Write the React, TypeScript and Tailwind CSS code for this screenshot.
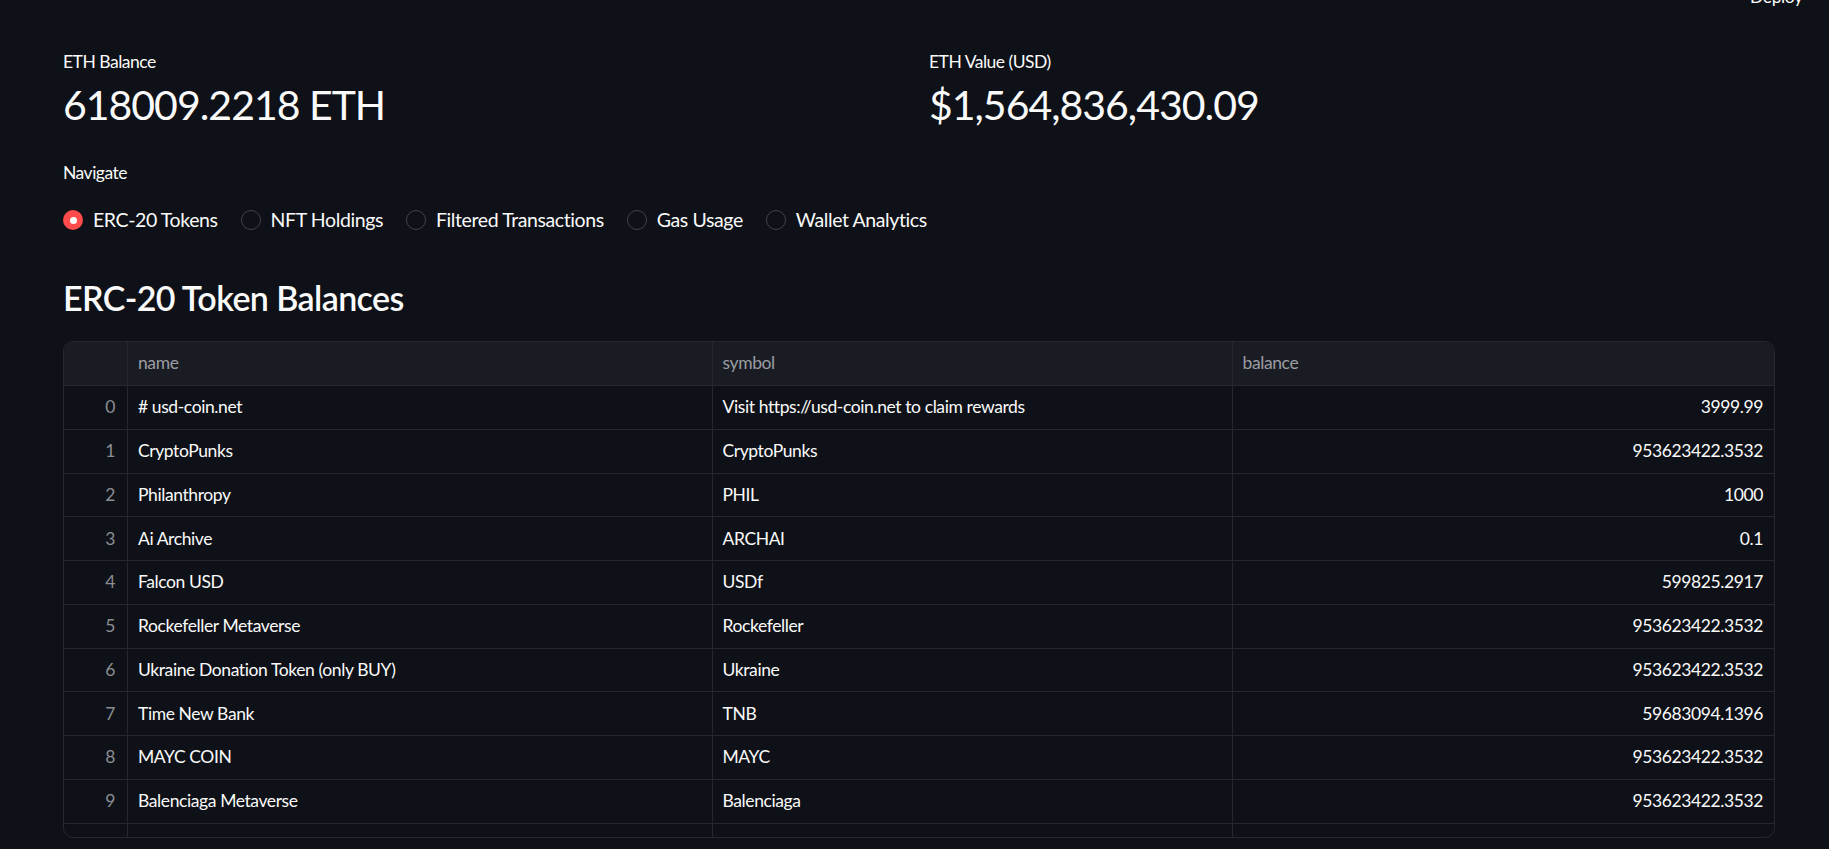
import React from 'react';

// Streamlit-like dark dashboard: ERC-20 token balances
type TokenRow = { name: string; symbol: string; balance: string };

const tokens: TokenRow[] = [
  { name: '# usd-coin.net', symbol: 'Visit https://usd-coin.net to claim rewards', balance: '3999.99' },
  { name: 'CryptoPunks', symbol: 'CryptoPunks', balance: '953623422.3532' },
  { name: 'Philanthropy', symbol: 'PHIL', balance: '1000' },
  { name: 'Ai Archive', symbol: 'ARCHAI', balance: '0.1' },
  { name: 'Falcon USD', symbol: 'USDf', balance: '599825.2917' },
  { name: 'Rockefeller Metaverse', symbol: 'Rockefeller', balance: '953623422.3532' },
  { name: 'Ukraine Donation Token (only BUY)', symbol: 'Ukraine', balance: '953623422.3532' },
  { name: 'Time New Bank', symbol: 'TNB', balance: '59683094.1396' },
  { name: 'MAYC COIN', symbol: 'MAYC', balance: '953623422.3532' },
  { name: 'Balenciaga Metaverse', symbol: 'Balenciaga', balance: '953623422.3532' },
  { name: 'Bored Ape Metaverse', symbol: 'BoredApe', balance: '953623422.3532' },
];

const navItems = ['ERC-20 Tokens', 'NFT Holdings', 'Filtered Transactions', 'Gas Usage', 'Wallet Analytics'];

function Metric({ label, value }: { label: string; value: string }) {
  return (
    <div className="flex flex-col">
      <div className="h-6 leading-6 text-[17.5px] tracking-[-0.5px] text-[#fafafa]">{label}</div>
      <div className="mt-[3px] h-14 leading-[56px] text-[41px] tracking-[-1px] text-[#fafafa]">{value}</div>
    </div>
  );
}

function Radio({ label, checked }: { label: string; checked: boolean }) {
  return (
    <label className="flex items-center gap-[10px] cursor-pointer">
      {checked ? (
        <span className="flex h-5 w-5 items-center justify-center rounded-full bg-[#ff4b4b]">
          <span className="h-[7px] w-[7px] rounded-full bg-white" />
        </span>
      ) : (
        <span className="h-5 w-5 rounded-full border border-[#42444c] bg-[#0e1117]" />
      )}
      <span className="text-[19.5px] tracking-[-0.4px] leading-[30px] text-[#fafafa]">{label}</span>
    </label>
  );
}

export default function App() {
  const selected = 'ERC-20 Tokens';
  const cols = 'grid grid-cols-[64px_584.5px_520px_1fr]';

  return (
    <div
      className="relative min-h-screen w-full overflow-hidden bg-[#0e1117] text-[#fafafa]"
      style={{ fontFamily: '"Source Sans Pro", Lato, "Noto Sans", sans-serif' }}
    >
      <div className="absolute left-[1750px] top-[-15px] h-6 leading-6 text-[17.5px] tracking-[-0.4px] text-[#fafafa]">Deploy</div>

      <div className="flex flex-col pl-[63px] pr-[54px] pt-[50px]">
        <div className="grid grid-cols-2 gap-5">
          <Metric label="ETH Balance" value="618009.2218 ETH" />
          <Metric label="ETH Value (USD)" value="$1,564,836,430.09" />
        </div>

        <div className="mt-[28px] h-6 leading-6 text-[17.5px] tracking-[-0.5px]">Navigate</div>
        <div className="mt-[20px] flex items-center gap-x-[23px]">
          {navItems.map((item) => (
            <Radio key={item} label={item} checked={item === selected} />
          ))}
        </div>

        <h3 className="mt-[41px] h-11 leading-[44px] text-[34px] tracking-[-0.6px] font-semibold">ERC-20 Token Balances</h3>

        <div className="mt-[21px] h-[497px] overflow-hidden rounded-[10px] border border-[#262830] text-[17.5px] tracking-[-0.4px]">
          <div className={`${cols} h-[44px] bg-[#1a1c24] border-b border-[#262830] text-[#9b9da3]`}>
            <div className="border-r border-[#262830]" />
            <div className="flex items-center border-r border-[#262830] pl-[10px]">name</div>
            <div className="flex items-center border-r border-[#262830] pl-[10px]">symbol</div>
            <div className="flex items-center pl-[10px]">balance</div>
          </div>
          {tokens.map((t, i) => (
            <div key={i} className={`${cols} h-[43.75px] border-b border-[#262830]`}>
              <div className="flex items-center justify-end border-r border-[#262830] pr-[12px] text-[#8b8d93]">{i}</div>
              <div className="flex items-center border-r border-[#262830] pl-[10px] whitespace-nowrap">{t.name}</div>
              <div className="flex items-center border-r border-[#262830] pl-[10px] whitespace-nowrap">{t.symbol}</div>
              <div className="flex items-center justify-end pr-[11px]">{t.balance}</div>
            </div>
          ))}
        </div>
      </div>
    </div>
  );
}
